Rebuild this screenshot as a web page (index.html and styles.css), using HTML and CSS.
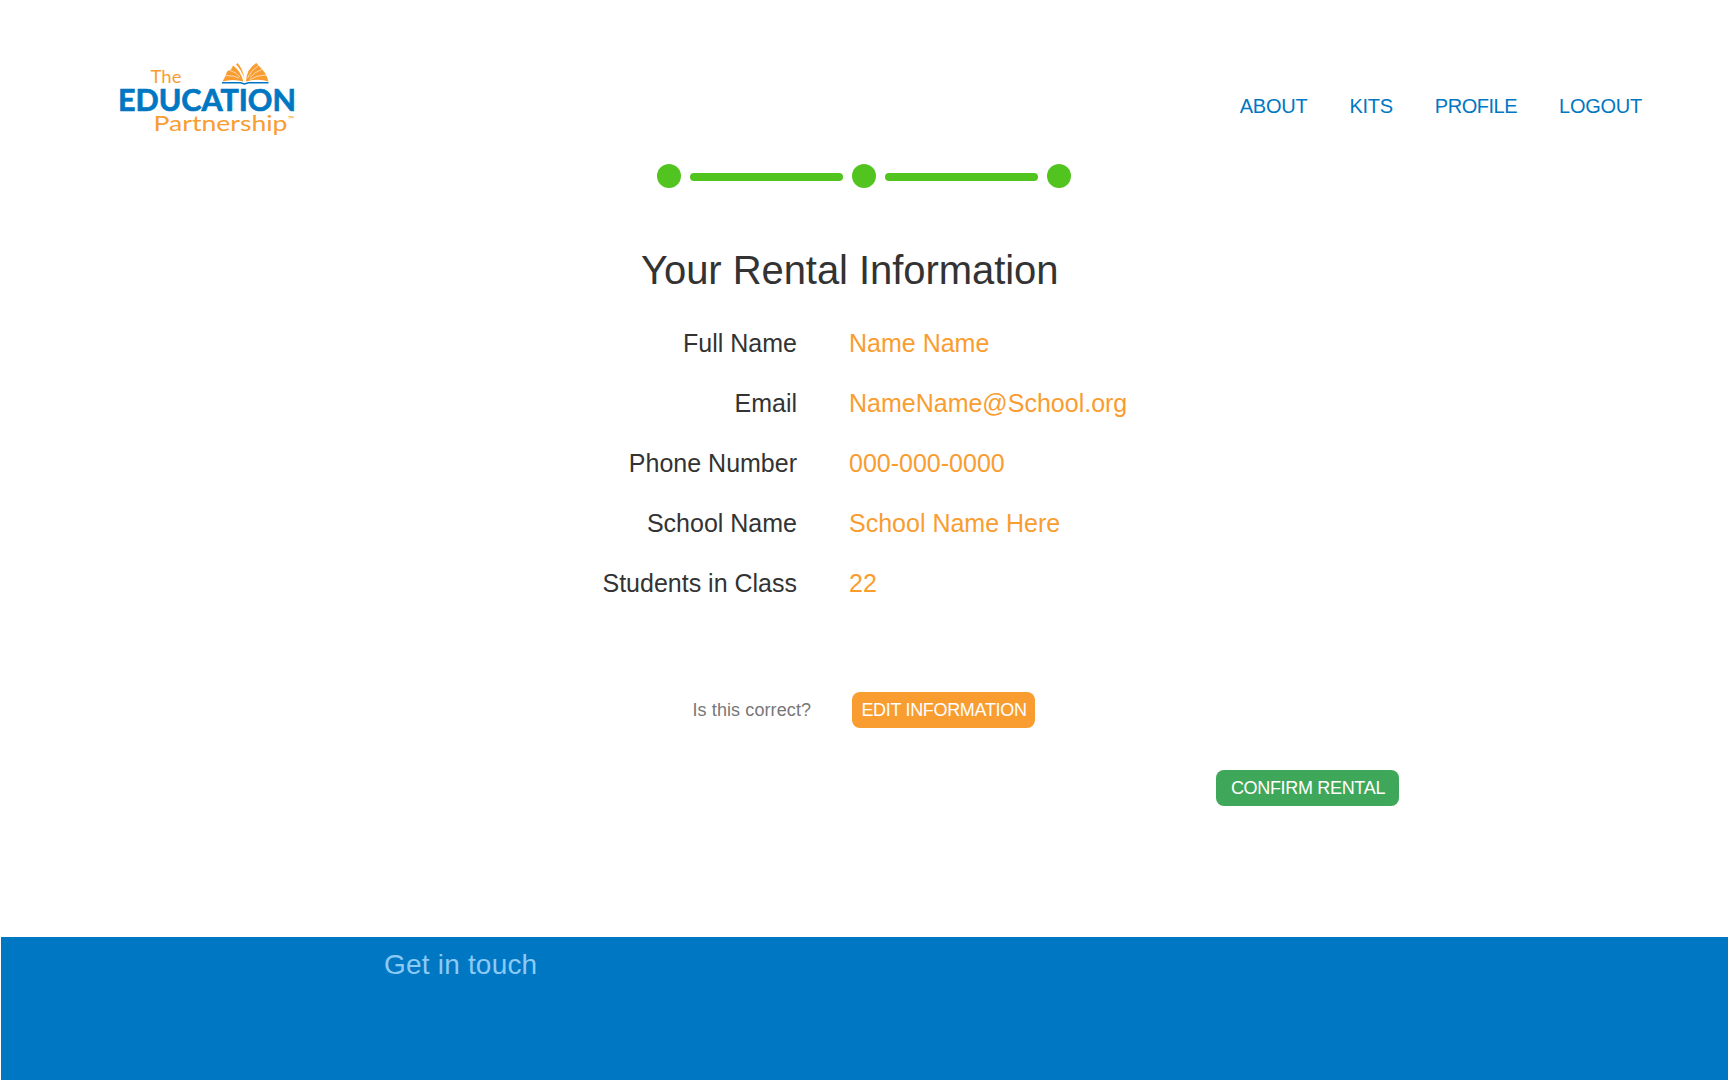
FILE: index.html
```html
<!DOCTYPE html>
<html lang="en">
<head>
<meta charset="utf-8">
<title>Your Rental Information</title>
<link rel="stylesheet" href="styles.css">
</head>
<body>
<header class="header">
  <svg class="logo" viewBox="0 0 180 80" role="img" aria-label="The Education Partnership">
    <g class="logo-book">
      <path d="M103.500 21.500L106.500 16L108 11.500L112 9.500L114 5.500Q121 10 124.500 21.500Q114 18.500 103.500 21.500Z"/>
      <path d="M118.500 3Q123.500 8 125.500 19Q122.500 10 117 4.500Z"/>
      <path d="M127 21.500Q127.500 8.500 137.500 3L139.500 5.500L142.500 8.500L146 13L148 17L149.500 21.500Q139 18 127 21.500Z"/>
    </g>
    <g class="logo-pages">
      <path d="M121 17Q117 12 111 10.500M120 18Q115 15.500 107 15.500"/>
      <path d="M128.500 18Q132 10 139.500 5.500M131 17.500Q136 11.500 143 9.500M131 19.500Q138 15 147 15"/>
    </g>
    <path class="logo-cover" d="M103 22.700H121.500L125.500 24L129.500 22.700H149.500"/>
    <text class="logo-the" x="31.500" y="22.700" textLength="31" lengthAdjust="spacingAndGlyphs">The</text>
    <text class="logo-main" x="-1" y="50.700" textLength="178" lengthAdjust="spacingAndGlyphs">EDUCATION</text>
    <text class="logo-sub" x="34.500" y="71" textLength="134" lengthAdjust="spacingAndGlyphs">Partnership</text>
    <text class="logo-tm" x="169" y="62">™</text>
  </svg>
  <nav class="nav">
    <a class="nav-link">ABOUT</a>
    <a class="nav-link">KITS</a>
    <a class="nav-link nav-link-tight">PROFILE</a>
    <a class="nav-link">LOGOUT</a>
  </nav>
</header>
<main class="main">
  <div class="steps">
    <span class="dot"></span><span class="bar"></span><span class="dot"></span><span class="bar"></span><span class="dot"></span>
  </div>
  <h1 class="title">Your Rental Information</h1>
  <dl class="info">
    <dt>Full Name</dt><dd>Name Name</dd>
    <dt>Email</dt><dd>NameName@School.org</dd>
    <dt>Phone Number</dt><dd>000-000-0000</dd>
    <dt>School Name</dt><dd>School Name Here</dd>
    <dt>Students in Class</dt><dd>22</dd>
  </dl>
  <div class="check">
    <span class="question">Is this correct?</span>
    <button class="button button-edit">EDIT INFORMATION</button>
  </div>
  <div class="confirm">
    <button class="button button-confirm">CONFIRM RENTAL</button>
  </div>
</main>
<footer class="footer">Get in touch</footer>
</body>
</html>
```
FILE: styles.css
```css
* { box-sizing: border-box; }
body {
  margin: 0;
  height: 1080px;
  display: flex;
  flex-direction: column;
  background: #fff;
  color: #333;
  font-family: "Liberation Sans", Arial, sans-serif;
  overflow: hidden;
}
.header {
  height: 164px;
  padding: 60px 86px 0 119px;
  display: flex;
  justify-content: space-between;
  align-items: flex-start;
}
.logo { width: 180px; height: 80px; overflow: visible; }
.logo-book { fill: #f99d31; }
.logo-pages { fill: none; stroke: #fff; stroke-width: 0.6; }
.logo-cover { fill: none; stroke: #0077c2; stroke-width: 1.6; }
.logo-the, .logo-sub, .logo-tm { fill: #f99d31; font-family: Lato, sans-serif; }
.logo-the { font-size: 17.5px; }
.logo-main { fill: #0077c2; font-family: Lato, sans-serif; font-weight: 700; font-size: 31px; stroke: #0077c2; stroke-width: 0.7; }
.logo-sub { font-size: 22px; }
.logo-tm { font-size: 8px; }
.nav { display: flex; gap: 42px; padding-top: 35px; }
.nav-link { font-size: 20px; line-height: 23px; letter-spacing: -0.250px; color: #0077c2; }
.nav-link-tight { letter-spacing: -0.480px; }
.main { flex: 1; display: flex; flex-direction: column; }
.steps { display: flex; align-items: center; justify-content: center; gap: 9px; height: 24px; }
.dot { width: 24px; height: 24px; border-radius: 50%; background: #52c41f; }
.bar { width: 153px; height: 8px; margin-top: 1px; border-radius: 4px; background: #52c41f; }
.title { margin: 59px 0 0 641px; font-size: 40px; line-height: 46px; font-weight: 400; letter-spacing: -0.060px; }
.info {
  margin: 20px 0 0;
  display: grid;
  grid-template-columns: 797px 1fr;
  column-gap: 52px;
  grid-auto-rows: 60px;
  font-size: 25px;
  line-height: 60px;
}
.info dt { text-align: right; }
.info dd { margin: 0; color: #f99d31; }
.check { display: flex; align-items: center; margin: 79px 0 0 692.500px; gap: 39.500px; }
.question { width: 120px; font-size: 18px; letter-spacing: 0.100px; color: #777; white-space: nowrap; }
.button {
  width: 183px;
  height: 36px;
  padding: 0;
  border: 0;
  border-radius: 8px;
  color: #fff;
  font: 18px/36px "Liberation Sans", Arial, sans-serif;
  letter-spacing: -0.320px;
  white-space: nowrap;
}
.button-edit { background: #f99d31; padding-left: 1px; }
.button-confirm { background: #3fa75a; padding-left: 1px; }
.confirm { display: flex; margin: 42px 0 0 1216px; }
.footer {
  height: 143px;
  margin-left: 1px;
  padding: 12px 0 0 383px;
  background: #0077c2;
  color: #8ccaf6;
  font-size: 28px;
  line-height: 32px;
  letter-spacing: 0.200px;
}
```
